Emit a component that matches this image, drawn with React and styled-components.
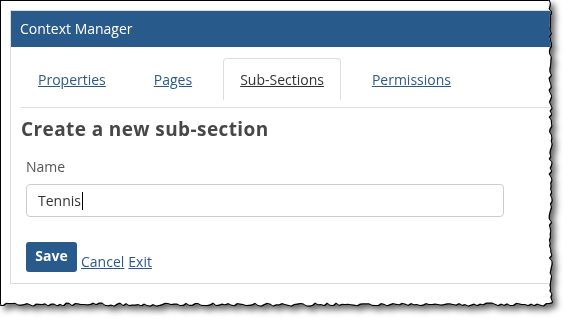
import React from 'react';
import styled, { createGlobalStyle } from 'styled-components';

const GlobalStyle = createGlobalStyle`
  html, body {
    margin: 0;
    padding: 0;
    background: #fff;
    font-family: "Open Sans", "Liberation Sans", sans-serif;
  }
`;

// torn paper edge along the right and bottom
const makeTornEdge = () => {
  let seed = 11;
  const rnd = () => {
    seed = (seed * 16807) % 2147483647;
    return seed / 2147483647;
  };
  const pts = ['0px 0px'];
  for (let y = 0; y <= 300; y += 3) {
    pts.push(`${(550 + rnd() * 3 - 1.5).toFixed(1)}px ${y}px`);
  }
  pts.push('552px 302px');
  for (let x = 549; x >= 0; x -= 3) {
    pts.push(`${x}px ${(304 + rnd() * 3 - 1.5).toFixed(1)}px`);
  }
  pts.push('0px 303px');
  return `polygon(${pts.join(', ')})`;
};

const tornEdge = makeTornEdge();

const Shadow = styled.div`
  width: 574px;
  height: 322px;
  filter: drop-shadow(1px 0 0 #000) drop-shadow(0 1px 0 #000)
    drop-shadow(4px 4px 3px rgba(0, 0, 0, 0.6));
`;

const Paper = styled.div`
  box-sizing: border-box;
  width: 555px;
  height: 308px;
  background: #fff;
  border-top: 1px solid #000;
  border-left: 1px solid #000;
  overflow: hidden;
  padding: 9px 0 0 9px;
  clip-path: ${(p) => p.$clip};
`;

const Panel = styled.div`
  box-sizing: border-box;
  width: 580px;
  height: 274px;
  border: 1px solid #dcdcdc;
  display: flex;
  flex-direction: column;
`;

const Header = styled.div`
  height: 36px;
  background: #285b8b;
  color: #fff;
  font-size: 14px;
  line-height: 36px;
  padding-left: 9px;
`;

const Body = styled.div`
  padding: 11px 0 0 10px;
  display: flex;
  flex-direction: column;
`;

const Tabs = styled.div`
  display: flex;
  gap: 14px;
  padding-bottom: 7px;
  border-bottom: 1px solid #e0e0e0;
`;

const Tab = styled.a`
  box-sizing: border-box;
  height: 42px;
  line-height: 42px;
  padding: 0 16px;
  font-size: 14px;
  color: ${(p) => (p.$active ? '#333' : '#2a5a8a')};
  text-decoration: underline;
  border: 1px solid ${(p) => (p.$active ? '#dddddd' : 'transparent')};
  border-bottom: none;
  border-radius: 4px 4px 0 0;
`;

const Form = styled.div`
  display: flex;
  flex-direction: column;
`;

const Heading = styled.h3`
  margin: 9px 0 0;
  font-size: 19px;
  letter-spacing: 0.4px;
  line-height: 24px;
  font-weight: 700;
  color: #474747;
`;

const Field = styled.div`
  padding-left: 5px;
  margin-top: 16px;
  display: flex;
  flex-direction: column;
`;

const Label = styled.label`
  font-size: 14px;
  line-height: 20px;
  color: #555;
`;

const InputBox = styled.div`
  box-sizing: border-box;
  margin-top: 7px;
  width: 478px;
  height: 33px;
  border: 1px solid #cccccc;
  border-radius: 4px;
  padding: 0 11px;
  font-size: 14px;
  line-height: 31px;
  color: #333;
  display: flex;
  align-items: center;
`;

const Caret = styled.span`
  display: inline-block;
  width: 1px;
  height: 18px;
  background: #000;
  margin-left: 1px;
`;

const Actions = styled.div`
  margin-top: 25px;
  padding-left: 5px;
  display: flex;
  align-items: flex-end;
  gap: 4px;
`;

const SaveButton = styled.button`
  width: 51px;
  height: 30px;
  border: none;
  border-radius: 3px;
  background: #285b8b;
  color: #fff;
  font-family: inherit;
  font-size: 14px;
  font-weight: 700;
  padding: 0 0 4px;
`;

const Link = styled.a`
  font-size: 14px;
  line-height: 20px;
  color: #2a5a8a;
  text-decoration: underline;
`;

export default function App() {
  return (
    <>
      <GlobalStyle />
      <Shadow>
        <Paper $clip={tornEdge}>
          <Panel>
            <Header>Context Manager</Header>
            <Body>
              <Tabs>
                <Tab>Properties</Tab>
                <Tab>Pages</Tab>
                <Tab $active>Sub-Sections</Tab>
                <Tab>Permissions</Tab>
              </Tabs>
              <Form>
                <Heading>Create a new sub-section</Heading>
                <Field>
                  <Label>Name</Label>
                  <InputBox>
                    Tennis
                    <Caret />
                  </InputBox>
                </Field>
                <Actions>
                  <SaveButton>Save</SaveButton>
                  <Link>Cancel</Link>
                  <Link>Exit</Link>
                </Actions>
              </Form>
            </Body>
          </Panel>
        </Paper>
      </Shadow>
    </>
  );
}
